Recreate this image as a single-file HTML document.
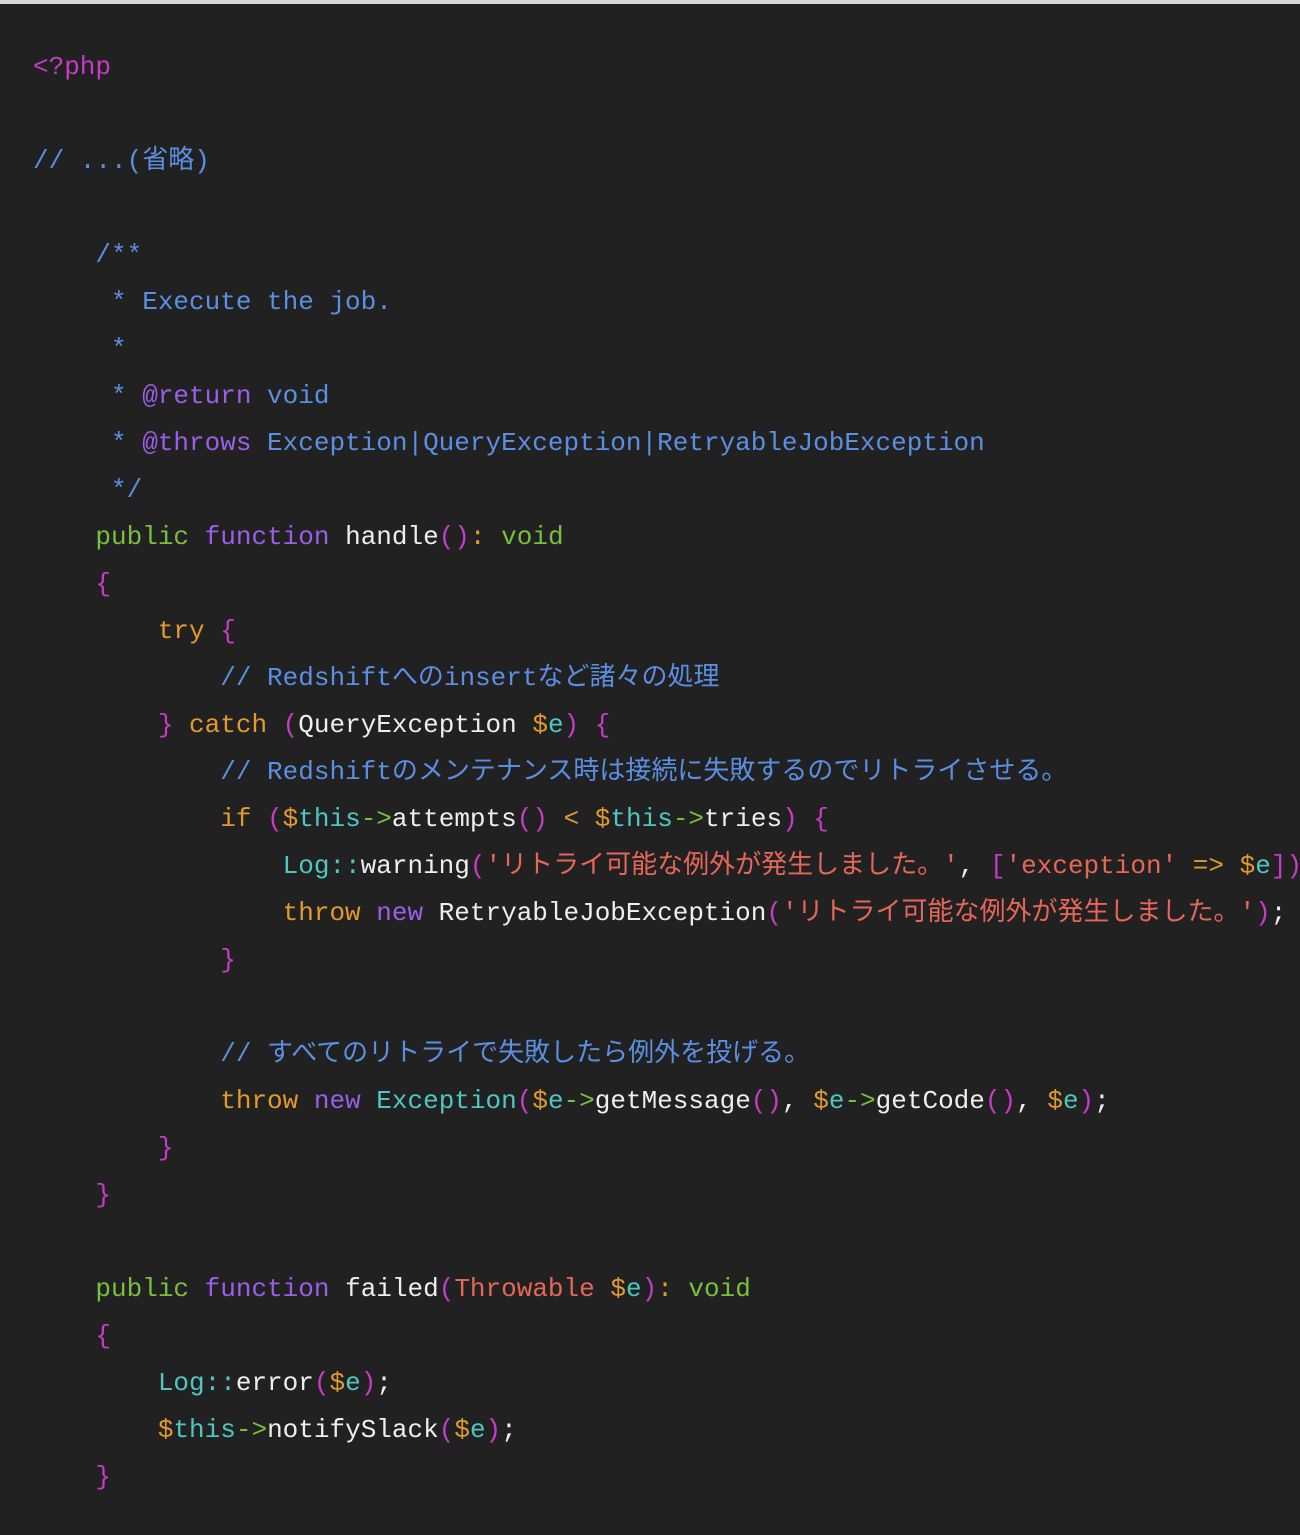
<!DOCTYPE html>
<html><head><meta charset="utf-8"><style>
html,body{margin:0;padding:0;}
body{width:1300px;height:1535px;background:#212121;overflow:hidden;position:relative;border-top:4px solid #d8d8d8;box-sizing:border-box;}
pre{position:absolute;left:33px;top:40px;margin:0;font-family:"Liberation Mono","Noto Sans CJK JP",monospace;font-size:26px;line-height:47px;color:#eeeeee;white-space:pre;letter-spacing:0;}
.m{color:#c63cc6}.c{color:#5b8fe3}.o{color:#e29b2b}.g{color:#78c03c}.p{color:#9b5ee9}.t{color:#4fc6c2}.s{color:#e6675a}.w{color:#eeeeee}
</style></head><body><pre><span class="m">&lt;?php</span>

<span class="c">// ...(省略)</span>

    <span class="c">/**</span>
<span class="c">     * Execute the job.</span>
<span class="c">     *</span>
<span class="c">     * </span><span class="p">@return</span><span class="c"> void</span>
<span class="c">     * </span><span class="p">@throws</span><span class="c"> Exception|QueryException|RetryableJobException</span>
<span class="c">     */</span>
    <span class="g">public</span> <span class="p">function</span> handle<span class="m">()</span><span class="o">:</span> <span class="g">void</span>
    <span class="m">{</span>
        <span class="o">try</span> <span class="m">{</span>
            <span class="c">// Redshiftへのinsertなど諸々の処理</span>
        <span class="m">}</span> <span class="o">catch</span> <span class="m">(</span>QueryException <span class="o">$</span><span class="t">e</span><span class="m">)</span> <span class="m">{</span>
            <span class="c">// Redshiftのメンテナンス時は接続に失敗するのでリトライさせる。</span>
            <span class="o">if</span> <span class="m">(</span><span class="o">$</span><span class="t">this</span><span class="g">-&gt;</span>attempts<span class="m">()</span> <span class="o">&lt;</span> <span class="o">$</span><span class="t">this</span><span class="g">-&gt;</span>tries<span class="m">)</span> <span class="m">{</span>
                <span class="t">Log</span><span class="t">::</span>warning<span class="m">(</span><span class="s">'リトライ可能な例外が発生しました。'</span>, <span class="m">[</span><span class="s">'exception'</span> <span class="o">=&gt;</span> <span class="o">$</span><span class="t">e</span><span class="m">])</span>;
                <span class="o">throw</span> <span class="p">new</span> RetryableJobException<span class="m">(</span><span class="s">'リトライ可能な例外が発生しました。'</span><span class="m">)</span>;
            <span class="m">}</span>

            <span class="c">// すべてのリトライで失敗したら例外を投げる。</span>
            <span class="o">throw</span> <span class="p">new</span> <span class="t">Exception</span><span class="m">(</span><span class="o">$</span><span class="t">e</span><span class="g">-&gt;</span>getMessage<span class="m">()</span>, <span class="o">$</span><span class="t">e</span><span class="g">-&gt;</span>getCode<span class="m">()</span>, <span class="o">$</span><span class="t">e</span><span class="m">)</span>;
        <span class="m">}</span>
    <span class="m">}</span>

    <span class="g">public</span> <span class="p">function</span> failed<span class="m">(</span><span class="s">Throwable</span> <span class="o">$</span><span class="t">e</span><span class="m">)</span><span class="o">:</span> <span class="g">void</span>
    <span class="m">{</span>
        <span class="t">Log::</span>error<span class="m">(</span><span class="o">$</span><span class="t">e</span><span class="m">)</span>;
        <span class="o">$</span><span class="t">this</span><span class="g">-&gt;</span>notifySlack<span class="m">(</span><span class="o">$</span><span class="t">e</span><span class="m">)</span>;
    <span class="m">}</span></pre></body></html>
